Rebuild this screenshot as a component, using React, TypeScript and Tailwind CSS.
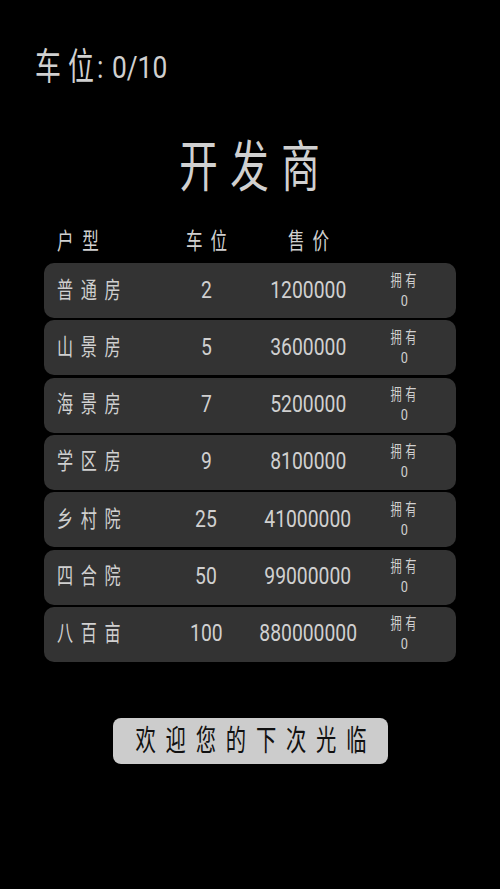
import React from "react";

const rows = [
  { name: "普通房", slots: "2", price: "1200000" },
  { name: "山景房", slots: "5", price: "3600000" },
  { name: "海景房", slots: "7", price: "5200000" },
  { name: "学区房", slots: "9", price: "8100000" },
  { name: "乡村院", slots: "25", price: "41000000" },
  { name: "四合院", slots: "50", price: "99000000" },
  { name: "八百亩", slots: "100", price: "880000000" },
];

export default function App() {
  return (
    <div className="w-[500px] h-[889px] bg-black text-[#d0d0d0] overflow-hidden font-[Roboto,'Noto_Sans_CJK_SC',sans-serif]">
      <div className="pt-[49px] pl-[35px] h-[86px] flex items-start">
        <span className="w-[62px] shrink-0 h-[37px] flex items-center">
          <span className="inline-block origin-left scale-x-[0.7] text-[37px] leading-[37px] whitespace-nowrap">
            <span className="mr-[10px]">车</span>位
          </span>
        </span>
        <span className="h-[37px] flex items-center">
          <span className="inline-block origin-left scale-x-[0.85] text-[31px] leading-[37px] whitespace-nowrap">
            <span className="mr-[10px]">:</span>0/10
          </span>
        </span>
      </div>

      <div className="mt-[53px] h-[56px] flex justify-center">
        <span className="inline-block text-[55px] leading-[56px] tracking-[18px] pl-[18px] scale-x-[0.7] whitespace-nowrap">
          开发商
        </span>
      </div>

      <div className="mt-[35px] ml-[44px] w-[412px] h-[24px] grid grid-cols-[109px_80px_124px_68px] pl-[13px] items-center">
        <span className="inline-block origin-left scale-x-[0.72] text-[23px] leading-[24px] tracking-[12px] whitespace-nowrap">
          户型
        </span>
        <span className="flex justify-center">
          <span className="inline-block scale-x-[0.72] text-[23px] leading-[24px] tracking-[11px] pl-[11px] whitespace-nowrap">
            车位
          </span>
        </span>
        <span className="flex justify-center">
          <span className="inline-block scale-x-[0.72] text-[23px] leading-[24px] tracking-[11px] pl-[11px] whitespace-nowrap">
            售价
          </span>
        </span>
        <span />
      </div>

      <div className="mt-[9px] ml-[44px] w-[412px] flex flex-col gap-[2.33px]">
        {rows.map((r) => (
          <div
            key={r.name}
            className="h-[55px] bg-[#333333] rounded-[10px] grid grid-cols-[109px_80px_124px_68px] pl-[13px] items-center"
          >
            <span className="inline-block origin-left scale-x-[0.7] text-[23px] leading-[28px] tracking-[11px] whitespace-nowrap">
              {r.name}
            </span>
            <span className="flex justify-center">
              <span className="inline-block scale-x-[0.84] text-[23px] leading-[28px] whitespace-nowrap">
                {r.slots}
              </span>
            </span>
            <span className="flex justify-center">
              <span className="inline-block scale-x-[0.84] text-[23px] leading-[28px] whitespace-nowrap">
                {r.price}
              </span>
            </span>
            <span className="flex flex-col items-center">
              <span className="inline-block scale-x-[0.7] text-[16px] leading-[20px] tracking-[5px] pl-[5px] whitespace-nowrap">
                拥有
              </span>
              <span className="inline-block scale-x-[0.85] text-[15px] leading-[20px]">0</span>
            </span>
          </div>
        ))}
      </div>

      <div className="mt-[56px] ml-[113px] w-[275px] h-[46px] bg-[#cccccc] rounded-[8px] flex items-center justify-center">
        <span className="inline-block scale-x-[0.7] text-[29px] leading-[32px] tracking-[14px] pl-[14px] text-[#111111] whitespace-nowrap">
          欢迎您的下次光临
        </span>
      </div>
    </div>
  );
}
